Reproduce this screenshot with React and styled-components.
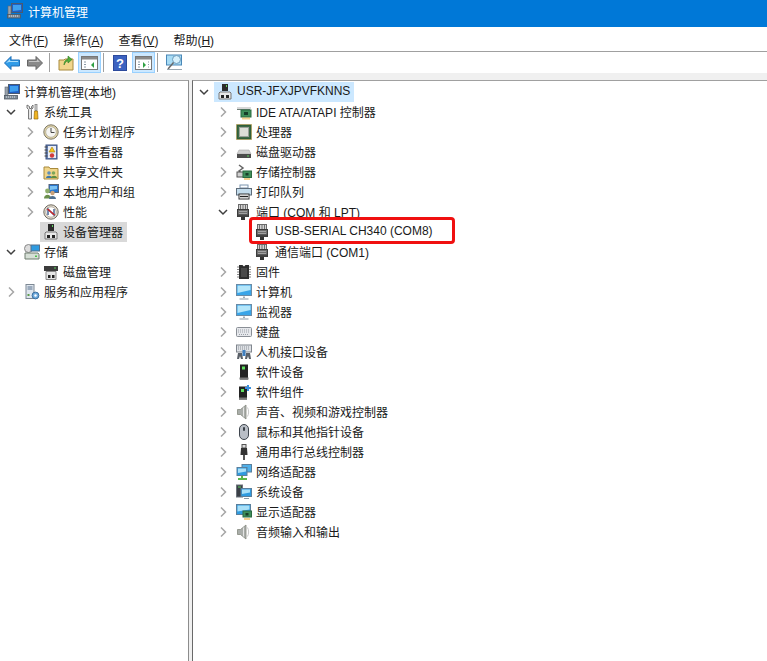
import React from 'react'
import styled, { createGlobalStyle } from 'styled-components'

const GlobalStyle = createGlobalStyle`
  html, body { margin: 0; padding: 0; background: #fff; }
  body {
    font-family: "Liberation Sans", "Noto Sans CJK SC", sans-serif;
    font-size: 12px;
    color: #1a1a1a;
  }
`

const Svg = ({ children }) => (
  <svg width="16" height="16" viewBox="0 0 16 16">{children}</svg>
)

const PortIcon = () => (
  <Svg>
    <rect x="2.500" y="0.500" width="9" height="5" fill="#d4d4d4" stroke="#6a6a6a" />
    <path d="M4.500 1v4M7 1v4M9.500 1v4" stroke="#707070" />
    <rect x="1.500" y="5.500" width="11" height="7" fill="#6e6e6e" stroke="#3c3c3c" />
    <path d="M3 7.500h8M3 9.500h8" stroke="#a2a2a2" />
    <rect x="2" y="10.500" width="10" height="2" fill="#444" />
    <rect x="5" y="13" width="4" height="3" fill="#333" />
  </Svg>
)

const DeviceIcon = () => (
  <Svg>
    <rect x="5" y="0" width="6" height="7" fill="#2b2b2b" />
    <rect x="9" y="1" width="1" height="2" fill="#5fd35f" />
    <path d="M3 8h10l1 1v6H2V9z" fill="#e8e8e8" stroke="#777" strokeWidth="1" />
    <rect x="4" y="11" width="3" height="3" fill="#222" />
    <rect x="9" y="11" width="3" height="3" fill="#222" />
  </Svg>
)

const MonitorIcon = () => (
  <Svg>
    <rect x="0.500" y="0.500" width="15" height="11" fill="#3aa5e8" stroke="#6a8ba6" />
    <path d="M1.500 1.500h13v4.500l-13 3z" fill="#b4e6fa" />
    <path d="M7 12.500h2v1.500H7z" fill="#a0acb6" />
    <path d="M3.500 15h9" stroke="#8a9aa6" />
  </Svg>
)

const icons = {
  computer: (
    <Svg>
      <rect x="4.500" y="0.500" width="11" height="9" fill="#1f5fc4" stroke="#4a5a70" />
      <path d="M6 2h8v5l-8 1z" fill="#3fa0ee" />
      <rect x="1" y="3" width="3" height="9" fill="#9aa3ad" stroke="#5c6670" strokeWidth="0.600" />
      <rect x="0.500" y="11.500" width="13" height="3.500" fill="#7f8a95" stroke="#4f5963" strokeWidth="0.800" />
      <path d="M2 13h10" stroke="#dfe5ea" strokeDasharray="1 1" />
    </Svg>
  ),
  tools: (
    <Svg>
      <path d="M3 1v3l1.500 1.500V15h3V5.500L9 4V1L7.500 2.500v2h-2v-2z" fill="#e6e6e6" stroke="#6c6c6c" strokeWidth="0.900" />
      <rect x="11" y="0.500" width="2" height="6" fill="#d8d8d8" stroke="#777" strokeWidth="0.700" />
      <path d="M10.500 7h3l.5 8h-4z" fill="#f0b420" stroke="#9a6d0c" strokeWidth="0.700" />
    </Svg>
  ),
  clock: (
    <Svg>
      <circle cx="8" cy="8" r="7.200" fill="#e3d6a8" stroke="#7d7868" />
      <circle cx="8" cy="8" r="5.300" fill="#f5f5f2" stroke="#a9a48e" strokeWidth="0.700" />
      <path d="M8 4v4.500h3.500" stroke="#444" strokeWidth="1" fill="none" />
    </Svg>
  ),
  eventlog: (
    <Svg>
      <rect x="3" y="1" width="11" height="14" fill="#6a86b8" stroke="#3b5080" />
      <rect x="5" y="2" width="8" height="12" fill="#e9edf5" />
      <path d="M1.500 3h3M1.500 6h3M1.500 9h3M1.500 12h3" stroke="#444" />
      <path d="M9 3l3 5H6z" fill="#f5c518" stroke="#a07a10" strokeWidth="0.600" />
      <circle cx="9" cy="11.500" r="2.200" fill="#d23c3c" />
    </Svg>
  ),
  share: (
    <Svg>
      <path d="M1 3h5l1 1.500h8V15H1z" fill="#f0d58a" stroke="#a88a3c" />
      <circle cx="6" cy="9" r="1.800" fill="#5f8fb8" />
      <path d="M3 14c0-3 6-3 6 0z" fill="#3f78a8" />
      <circle cx="10.500" cy="9" r="1.800" fill="#7da65a" />
      <path d="M8 14c0-3 6-3 6 0z" fill="#5f8f42" />
    </Svg>
  ),
  users: (
    <Svg>
      <rect x="6" y="0.500" width="9.500" height="8" fill="#2a78d0" stroke="#55657a" />
      <path d="M7 2h7v3l-7 1z" fill="#7cc2f2" />
      <circle cx="4.500" cy="7" r="2.400" fill="#8fae6c" />
      <path d="M1 14.500c0-5 7-5 7 0z" fill="#6b8f4c" />
      <circle cx="9.500" cy="9" r="2.200" fill="#c9a27a" />
      <path d="M6 15c0-4 7-4 7 0z" fill="#50708f" />
    </Svg>
  ),
  perf: (
    <Svg>
      <circle cx="8" cy="8" r="7.200" fill="#e5ded0" stroke="#6f6a60" />
      <circle cx="8" cy="8" r="5.200" fill="#fff" stroke="#8d877a" strokeWidth="0.600" />
      <path d="M5 11V5l6 6V5" fill="none" stroke="#1c3f7a" strokeWidth="1.200" />
      <path d="M4.500 5l7 6" stroke="#d02828" strokeWidth="1.600" />
    </Svg>
  ),
  device: <DeviceIcon />,
  storage: (
    <Svg>
      <circle cx="4.500" cy="4.500" r="4" fill="#dcdcdc" stroke="#888" />
      <rect x="7" y="1" width="8.500" height="6" fill="#2f9be0" stroke="#55708c" />
      <path d="M1 9h13l1 1.500V15H1z" fill="#d6dfd6" stroke="#6e7d6e" />
      <rect x="11" y="11.500" width="2" height="1.500" fill="#4ac04a" />
    </Svg>
  ),
  disk: (
    <Svg>
      <rect x="1" y="2" width="14" height="5" fill="#3c3c3c" />
      <rect x="11" y="3.500" width="2" height="1" fill="#5fd35f" />
      <path d="M3 7.500h10v8H3z" fill="#e6e6e6" stroke="#888" />
      <rect x="5" y="11" width="2.500" height="3" fill="#222" />
      <rect x="9" y="11" width="2.500" height="3" fill="#222" />
    </Svg>
  ),
  services: (
    <Svg>
      <rect x="2" y="0.500" width="8" height="14" fill="#dfe6ee" stroke="#7d8894" />
      <path d="M3.500 3h5M3.500 5h5" stroke="#58708c" />
      <rect x="3.500" y="10" width="2" height="2" fill="#5d9c4a" />
      <circle cx="11.500" cy="11.500" r="3.400" fill="#6ea9dc" stroke="#3d6f9e" />
      <circle cx="11.500" cy="11.500" r="1.200" fill="#fff" />
    </Svg>
  ),
  ide: (
    <Svg>
      <path d="M1 3h13v3H1z" fill="#6f7f78" />
      <rect x="1" y="3" width="14" height="2" fill="#d8d8d8" />
      <rect x="5" y="6" width="10" height="7" fill="#3f8f5a" stroke="#2b6a40" />
      <rect x="8" y="8" width="4" height="3" fill="#173f29" />
      <path d="M7 13.500v2M9 13.500v2M11 13.500v2M13 13.500v2" stroke="#e6a41e" />
    </Svg>
  ),
  cpu: (
    <Svg>
      <rect x="0.500" y="0.500" width="15" height="15" fill="#2f5f3a" stroke="#b8943c" strokeDasharray="1 1" />
      <rect x="2" y="2" width="12" height="12" fill="#3d6b47" />
      <rect x="3.500" y="3.500" width="9" height="9" fill="#dcdfd8" stroke="#9aa19a" />
    </Svg>
  ),
  drive: (
    <Svg>
      <path d="M3 6h10l2 4H1z" fill="#d0d0d0" stroke="#a8a8a8" strokeWidth="0.600" />
      <rect x="1" y="10" width="14" height="4" fill="#4c4c4c" />
      <rect x="11" y="11.500" width="2" height="1" fill="#5fd35f" />
    </Svg>
  ),
  storctl: (
    <Svg>
      <path d="M3 1l4 3-4 3 4 3" stroke="#666" strokeWidth="1.500" fill="none" />
      <rect x="1" y="8" width="8" height="5" fill="#d0d0d0" stroke="#555" />
      <rect x="7" y="7" width="8.500" height="6.500" fill="#3f8f5a" stroke="#2b6a40" />
      <rect x="9.500" y="9" width="3" height="2.500" fill="#173f29" />
      <path d="M9 14v2M11 14v2M13 14v2" stroke="#e6a41e" />
    </Svg>
  ),
  printer: (
    <Svg>
      <rect x="4" y="1" width="8" height="3" fill="#fff" stroke="#7b93ad" />
      <rect x="0.500" y="4.500" width="15" height="6.500" fill="#c3dcec" stroke="#5e6c7a" />
      <rect x="3" y="10" width="10" height="5" fill="#fff" stroke="#333" />
      <path d="M4 12.500h8" stroke="#222" strokeWidth="1.400" />
    </Svg>
  ),
  port: <PortIcon />,
  firmware: (
    <Svg>
      <path d="M3 1h3.500L8 2.500 9.500 1H13v14H3z" fill="#2e2e2e" />
      <rect x="5" y="4" width="6" height="9" fill="#4a4a4a" />
      <path d="M1 3h2M1 5.500h2M1 8h2M1 10.500h2M1 13h2M13 3h2M13 5.500h2M13 8h2M13 10.500h2M13 13h2" stroke="#888" />
    </Svg>
  ),
  monitor: <MonitorIcon />,
  keyboard: (
    <Svg>
      <rect x="0.500" y="3.500" width="15" height="9" rx="1" fill="#e6e8ec" stroke="#8a8f96" />
      <path d="M2 6h12M2 8h12M3 10.500h10" stroke="#9aa0a8" strokeDasharray="1 1" />
    </Svg>
  ),
  hid: (
    <Svg>
      <rect x="0.500" y="1" width="15" height="7" fill="#dfe2e6" stroke="#80868e" />
      <path d="M2 3h12M2 5h12" stroke="#8a9098" strokeDasharray="1 1" />
      <path d="M1 15l1-6h4l1 6H5l-1-3-1 3zM9 15l1-6h4l1 6h-2l-1-3-1 3z" fill="#5a6068" />
      <rect x="6.500" y="6" width="3" height="6" fill="#3f7fc0" />
    </Svg>
  ),
  soft: (
    <Svg>
      <rect x="4" y="0.500" width="8" height="15" fill="#222" />
      <rect x="6" y="2.500" width="3" height="3" fill="#5fe05f" />
      <rect x="3.500" y="13.500" width="9" height="2" fill="#777" />
    </Svg>
  ),
  softcomp: (
    <Svg>
      <rect x="3" y="2.500" width="8" height="13" fill="#222" />
      <rect x="5" y="5" width="3" height="3" fill="#5fe05f" />
      <rect x="3" y="13.500" width="8" height="2" fill="#777" />
      <path d="M11 1h2v2h2v2h-2v2h-2V5H9V3h2z" fill="#3a8fdc" />
    </Svg>
  ),
  speaker: (
    <Svg>
      <path d="M1.500 5.500h3L10 1v14l-5.500-4.500h-3z" fill="#a9ada9" stroke="#85897f" strokeWidth="0.800" />
      <path d="M7.500 3.500v9" stroke="#e4e4e4" />
      <path d="M11.500 3.500c1.500 2.500 1.500 6.500 0 9" stroke="#c8c8c8" fill="none" />
    </Svg>
  ),
  mouse: (
    <Svg>
      <rect x="3.500" y="0.500" width="9" height="15" rx="4.500" fill="#b9bec6" stroke="#3f454d" />
      <rect x="7" y="3" width="2" height="4" rx="1" fill="#3a4048" />
    </Svg>
  ),
  usb: (
    <Svg>
      <rect x="6" y="0.500" width="4" height="3.500" fill="#ddd" stroke="#555" />
      <path d="M5 4h6l.5 7h-7z" fill="#333" />
      <path d="M7 11h2v5H7z" fill="#555" />
    </Svg>
  ),
  network: (
    <Svg>
      <rect x="6" y="0.500" width="9.500" height="7.500" fill="#4fb0ea" stroke="#5a7f9c" />
      <rect x="1" y="3.500" width="10" height="8" fill="#2f9be0" stroke="#5a7f9c" />
      <path d="M2 4.500h8v3l-8 1.500z" fill="#a9e0f8" />
      <path d="M6 12v2M2 15h9" stroke="#5cb84a" strokeWidth="2" />
    </Svg>
  ),
  system: (
    <Svg>
      <rect x="0.500" y="1" width="6" height="12" fill="#3a3f46" stroke="#6d747c" />
      <rect x="2" y="2.500" width="3" height="1" fill="#5fd35f" />
      <rect x="5" y="4.500" width="10.500" height="8" fill="#2f9be0" stroke="#5a7f9c" />
      <path d="M6 5.500h8v3l-8 1.500z" fill="#a9e0f8" />
      <path d="M8 14.500h5" stroke="#8a9aa6" />
    </Svg>
  ),
  display: (
    <Svg>
      <rect x="0.500" y="0.500" width="14" height="10" fill="#2f9be0" stroke="#5a7f9c" />
      <path d="M1.500 1.500h12v4l-12 2z" fill="#a9e0f8" />
      <rect x="7" y="7" width="8.500" height="6" fill="#3f8f5a" stroke="#2b6a40" />
      <rect x="9.500" y="9" width="3" height="2.500" fill="#173f29" />
      <path d="M9 14v2M11 14v2M13 14v2" stroke="#e6a41e" />
    </Svg>
  ),
}

const leftTree = [
  { label: '计算机管理(本地)', icon: 'computer', root: true },
  { label: '系统工具', icon: 'tools', depth: 0, arrow: 'open' },
  { label: '任务计划程序', icon: 'clock', depth: 1, arrow: 'closed' },
  { label: '事件查看器', icon: 'eventlog', depth: 1, arrow: 'closed' },
  { label: '共享文件夹', icon: 'share', depth: 1, arrow: 'closed' },
  { label: '本地用户和组', icon: 'users', depth: 1, arrow: 'closed' },
  { label: '性能', icon: 'perf', depth: 1, arrow: 'closed' },
  { label: '设备管理器', icon: 'device', depth: 1, selected: 'grey' },
  { label: '存储', icon: 'storage', depth: 0, arrow: 'open' },
  { label: '磁盘管理', icon: 'disk', depth: 1 },
  { label: '服务和应用程序', icon: 'services', depth: 0, arrow: 'closed' },
]

const rightTree = [
  { label: 'USR-JFXJPVFKNNS', icon: 'device', depth: 0, arrow: 'open', selected: 'blue' },
  { label: 'IDE ATA/ATAPI 控制器', icon: 'ide', depth: 1, arrow: 'closed' },
  { label: '处理器', icon: 'cpu', depth: 1, arrow: 'closed' },
  { label: '磁盘驱动器', icon: 'drive', depth: 1, arrow: 'closed' },
  { label: '存储控制器', icon: 'storctl', depth: 1, arrow: 'closed' },
  { label: '打印队列', icon: 'printer', depth: 1, arrow: 'closed' },
  { label: '端口 (COM 和 LPT)', icon: 'port', depth: 1, arrow: 'open' },
  { label: 'USB-SERIAL CH340 (COM8)', icon: 'port', depth: 2, marked: true },
  { label: '通信端口 (COM1)', icon: 'port', depth: 2 },
  { label: '固件', icon: 'firmware', depth: 1, arrow: 'closed' },
  { label: '计算机', icon: 'monitor', depth: 1, arrow: 'closed' },
  { label: '监视器', icon: 'monitor', depth: 1, arrow: 'closed' },
  { label: '键盘', icon: 'keyboard', depth: 1, arrow: 'closed' },
  { label: '人机接口设备', icon: 'hid', depth: 1, arrow: 'closed' },
  { label: '软件设备', icon: 'soft', depth: 1, arrow: 'closed' },
  { label: '软件组件', icon: 'softcomp', depth: 1, arrow: 'closed' },
  { label: '声音、视频和游戏控制器', icon: 'speaker', depth: 1, arrow: 'closed' },
  { label: '鼠标和其他指针设备', icon: 'mouse', depth: 1, arrow: 'closed' },
  { label: '通用串行总线控制器', icon: 'usb', depth: 1, arrow: 'closed' },
  { label: '网络适配器', icon: 'network', depth: 1, arrow: 'closed' },
  { label: '系统设备', icon: 'system', depth: 1, arrow: 'closed' },
  { label: '显示适配器', icon: 'display', depth: 1, arrow: 'closed' },
  { label: '音频输入和输出', icon: 'speaker', depth: 1, arrow: 'closed' },
]

const menus = [
  ['文件', 'F'],
  ['操作', 'A'],
  ['查看', 'V'],
  ['帮助', 'H'],
]

function Arrow({ kind }) {
  if (kind === 'open') {
    return (
      <svg width="10" height="10" viewBox="0 0 10 10">
        <path d="M1 3l4 4 4-4" fill="none" stroke="#404040" strokeWidth="1.500" />
      </svg>
    )
  }
  if (kind === 'closed') {
    return (
      <svg width="10" height="10" viewBox="0 0 10 10">
        <path d="M3 0.500l4.500 4.500-4.500 4.500" fill="none" stroke="#a6a6a6" strokeWidth="1.500" />
      </svg>
    )
  }
  return null
}

function TreeRow({ item }) {
  return (
    <Row $depth={item.depth} $root={item.root} $marked={item.marked}>
      {!item.root && (
        <ArrowSlot>
          <Arrow kind={item.arrow} />
        </ArrowSlot>
      )}
      <Content $selected={item.selected}>
        {icons[item.icon]}
        <Label>{item.label}</Label>
      </Content>
    </Row>
  )
}

function PaneGlyph({ side }) {
  const arrow = side === 'left' ? 'M13 7v6l-3-3z' : 'M8 7v6l3-3z'
  return (
    <svg width="17" height="16" viewBox="0 0 17 16">
      <rect x="0.500" y="1.500" width="16" height="13" fill="#fff" stroke="#777" />
      <rect x="1" y="2" width="15" height="2.500" fill="#8a8a8a" />
      <path d="M3 7h2M3 9.500h2M3 12h2" stroke="#8a9aa6" />
      <path d="M13 7h1M13 9.500h1M13 12h1" stroke={side === 'left' ? 'transparent' : '#8a9aa6'} />
      <path d={arrow} fill="#2ea043" />
    </svg>
  )
}

export default function App() {
  return (
    <Window>
      <GlobalStyle />
      <TitleBar>
        <TitleIcon>{icons.computer}</TitleIcon>
        <span>计算机管理</span>
      </TitleBar>
      <MenuBar>
        {menus.map(([name, key]) => (
          <MenuItem key={key}>
            {name}(<u>{key}</u>)
          </MenuItem>
        ))}
      </MenuBar>
      <Toolbar>
        <BackButton>
          <svg width="16" height="14" viewBox="0 0 16 14">
            <path d="M0.500 7L7 0.500V4h8.500v6H7v3.500z" fill="#2f9be8" stroke="#1d6fb8" />
            <path d="M2 7l4-4v2h8v1H5z" fill="#a8dcfa" />
          </svg>
        </BackButton>
        <ToolButton>
          <svg width="16" height="14" viewBox="0 0 16 14">
            <path d="M15.500 7L9 0.500V4H0.500v6H9v3.500z" fill="#8a8a8a" stroke="#666" />
            <path d="M2 5h8V3l3 3H2z" fill="#c4c4c4" />
          </svg>
        </ToolButton>
        <ToolSep />
        <ToolButton>
          <svg width="16" height="16" viewBox="0 0 16 16">
            <path d="M1 5h5l1-1h8v11H1z" fill="#f2d68c" stroke="#a88a3c" />
            <path d="M6 10c0-3 1-5 4-6V1l4 3.500L10 8V6c-2 0-3 2-4 4z" fill="#4fae3c" stroke="#2f7d22" strokeWidth="0.600" />
          </svg>
        </ToolButton>
        <ToolButton $active>
          <PaneGlyph side="left" />
        </ToolButton>
        <ToolSep />
        <ToolButton>
          <svg width="14" height="16" viewBox="0 0 14 16">
            <rect width="14" height="16" fill="#2c4a9c" />
            <rect x="1" y="1" width="12" height="14" fill="#3c62c0" />
            <text x="7" y="13" textAnchor="middle" fontSize="13" fontWeight="700" fill="#fff" fontFamily="Liberation Sans">?</text>
          </svg>
        </ToolButton>
        <ToolButton $active>
          <PaneGlyph side="right" />
        </ToolButton>
        <ToolSep />
        <ToolButton>
          <svg width="17" height="17" viewBox="0 0 17 17">
            <rect x="0.500" y="1" width="15" height="10" fill="#a8dcf5" stroke="#4a88b8" />
            <circle cx="10.500" cy="5.500" r="4" fill="#d6f0fb" stroke="#6a9abc" />
            <path d="M7.500 8.500L2 15" stroke="#6a6a6a" strokeWidth="1.500" />
            <path d="M1 15.500h15" stroke="#9aa8b2" />
          </svg>
        </ToolButton>
      </Toolbar>
      <Gutter />
      <Panes>
        <LeftPane>
          {leftTree.map((item) => (
            <TreeRow key={item.label} item={item} />
          ))}
        </LeftPane>
        <RightPane>
          {rightTree.map((item) => (
            <TreeRow key={item.label} item={item} />
          ))}
        </RightPane>
      </Panes>
    </Window>
  )
}

const Window = styled.div`
  width: 767px;
  height: 661px;
  display: flex;
  flex-direction: column;
  overflow: hidden;
  background: #fff;
`

const TitleBar = styled.div`
  height: 27px;
  flex: none;
  box-sizing: border-box;
  display: flex;
  align-items: center;
  padding: 0 0 5px 7px;
  gap: 5px;
  background: #0078d7;
  color: #fff;
`

const TitleIcon = styled.span`
  display: flex;
  svg { display: block; }
`

const MenuBar = styled.div`
  height: 25px;
  flex: none;
  display: flex;
  align-items: center;
  padding: 0 0 0 9px;
  gap: 15px;
  box-sizing: border-box;
  border-bottom: 1px solid #a0a0a0;
`

const MenuItem = styled.span`
  color: #1a1a1a;
`

const Toolbar = styled.div`
  height: 21px;
  flex: none;
  display: flex;
  align-items: center;
  padding-left: 4px;
  background: #fff;
`

const ToolButton = styled.div`
  width: ${(p) => (p.$active ? '23px' : '16px')};
  height: 21px;
  box-sizing: border-box;
  display: flex;
  align-items: center;
  justify-content: center;
  margin-right: ${(p) => (p.$active ? '0' : '4px')};
  background: ${(p) => (p.$active ? '#cce8ff' : 'transparent')};
  border: 1px solid ${(p) => (p.$active ? '#99d1ff' : 'transparent')};
  svg { display: block; flex: none; }
`

const BackButton = styled(ToolButton)`
  margin-right: 7px;
`

const ToolSep = styled.div`
  width: 1px;
  height: 19px;
  margin: 0 8px 0 2px;
  background: #a0a0a0;
`

const Gutter = styled.div`
  height: 7px;
  flex: none;
  background: #f0f0f0;
`

const Panes = styled.div`
  flex: 1;
  display: flex;
  background: #f0f0f0;
  min-height: 0;
`

const LeftPane = styled.div`
  width: 189px;
  flex: none;
  box-sizing: border-box;
  padding-top: 1px;
  background: #fff;
  border-top: 1px solid #a0a0a0;
  border-right: 1px solid #8c8c8c;
`

const RightPane = styled.div`
  flex: 1;
  margin-left: 3px;
  box-sizing: border-box;
  padding-top: 1px;
  background: #fff;
  border-top: 1px solid #a0a0a0;
  border-left: 1px solid #696969;
`

const Row = styled.div`
  position: relative;
  height: 20px;
  display: flex;
  align-items: center;
  padding-left: ${(p) => (p.$root ? 1 : p.$depth * 19)}px;
  ${(p) =>
    p.$marked &&
    `
    &::after {
      content: '';
      position: absolute;
      left: 56px;
      top: -5px;
      width: 206px;
      height: 27px;
      box-sizing: border-box;
      border: 3px solid #f01010;
      border-radius: 4px;
    }
  `}
`

const ArrowSlot = styled.span`
  width: 21px;
  flex: none;
  display: flex;
  justify-content: center;
  svg { display: block; }
`

const Content = styled.span`
  display: flex;
  align-items: center;
  height: 20px;
  gap: 4px;
  padding: 0 4px 0 3px;
  white-space: nowrap;
  background: ${(p) =>
    p.$selected === 'blue' ? '#cce8ff' : p.$selected === 'grey' ? '#d9d9d9' : 'transparent'};
  svg { display: block; flex: none; }
`

const Label = styled.span`
  padding-bottom: 2px;
`
